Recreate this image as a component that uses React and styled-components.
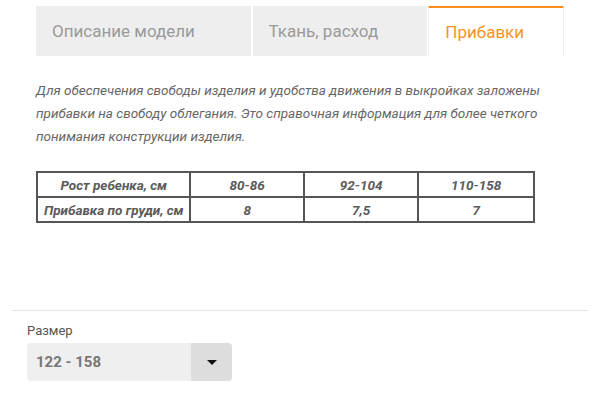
import React from "react";
import styled, { createGlobalStyle } from "styled-components";

const GlobalStyle = createGlobalStyle`
  body {
    margin: 0;
    background: #fff;
    font-family: Roboto, "Liberation Sans", sans-serif;
  }
`;

const Page = styled.div`
  width: 600px;
  height: 400px;
  overflow: hidden;
`;

const Product = styled.section`
  padding: 6px 0 0 36px;
  width: 528px;
`;

const Tabs = styled.div`
  display: flex;
  height: 50px;
`;

const Tab = styled.div`
  box-sizing: border-box;
  width: ${(props) => props.width}px;
  margin-right: ${(props) => (props.gap ? props.gap : 0)}px;
  display: flex;
  align-items: center;
  padding-left: 16px;
  font-size: 17px;
  color: ${(props) => (props.active ? "#f7931e" : "#9a9a9a")};
  background: ${(props) => (props.active ? "#fff" : "#eee")};
  border-top: ${(props) => (props.active ? "2px solid #ff8c1a" : "none")};
  border-left: ${(props) => (props.active ? "1px solid #eee" : "none")};
  border-right: ${(props) => (props.active ? "1px solid #eee" : "none")};
`;

const Text = styled.p`
  margin: 23px 0 0;
  font-size: 13.5px;
  font-style: italic;
  line-height: 23px;
  color: #666;
  width: 520px;
`;

const Table = styled.table`
  margin-top: 23px;
  width: 499px;
  border-collapse: collapse;
  border: 2px solid #555;
`;

const Td = styled.td`
  border: 2px solid #555;
  height: 23px;
  padding: 0;
  width: ${(props) => props.width}px;
  text-align: center;
  font-size: 13.5px;
  font-weight: 700;
  font-style: italic;
  color: #5a5a5a;
`;

const Divider = styled.hr`
  margin: 87px 12px 0;
  border: none;
  border-top: 1px solid #e6e6e6;
`;

const Options = styled.div`
  padding: 12px 0 0 27px;
`;

const Label = styled.div`
  font-size: 13px;
  color: #555;
  line-height: 15px;
`;

const Select = styled.div`
  margin-top: 5px;
  display: flex;
  width: 205px;
  height: 38px;
  border-radius: 4px;
  overflow: hidden;
  background: #efefef;
`;

const Value = styled.div`
  flex: 1;
  display: flex;
  align-items: center;
  padding-left: 9px;
  font-size: 15px;
  font-weight: 700;
  color: #777;
`;

const Caret = styled.div`
  width: 41px;
  display: flex;
  align-items: center;
  justify-content: center;
  background: #ddd;

  &::after {
    content: "";
    border-left: 5px solid transparent;
    border-right: 5px solid transparent;
    border-top: 5px solid #111;
  }
`;

const rows = [
  ["Рост ребенка, см", "80-86", "92-104", "110-158"],
  ["Прибавка по груди, см", "8", "7,5", "7"],
];
const widths = [154, 114, 115, 116];

const App = () => (
  <Page>
    <GlobalStyle />
    <Product>
      <Tabs>
        <Tab width={215} gap={2}>Описание модели</Tab>
        <Tab width={175} gap={1}>Ткань, расход</Tab>
        <Tab width={136} active>Прибавки</Tab>
      </Tabs>
      <Text>
        Для обеспечения свободы изделия и удобства движения в выкройках заложены
        прибавки на свободу облегания. Это справочная информация для более четкого
        понимания конструкции изделия.
      </Text>
      <Table>
        <tbody>
          {rows.map((row, i) => (
            <tr key={i}>
              {row.map((cell, j) => (
                <Td key={j} width={widths[j]}>{cell}</Td>
              ))}
            </tr>
          ))}
        </tbody>
      </Table>
    </Product>
    <Divider />
    <Options>
      <Label>Размер</Label>
      <Select>
        <Value>122 - 158</Value>
        <Caret />
      </Select>
    </Options>
  </Page>
);

export default App;
